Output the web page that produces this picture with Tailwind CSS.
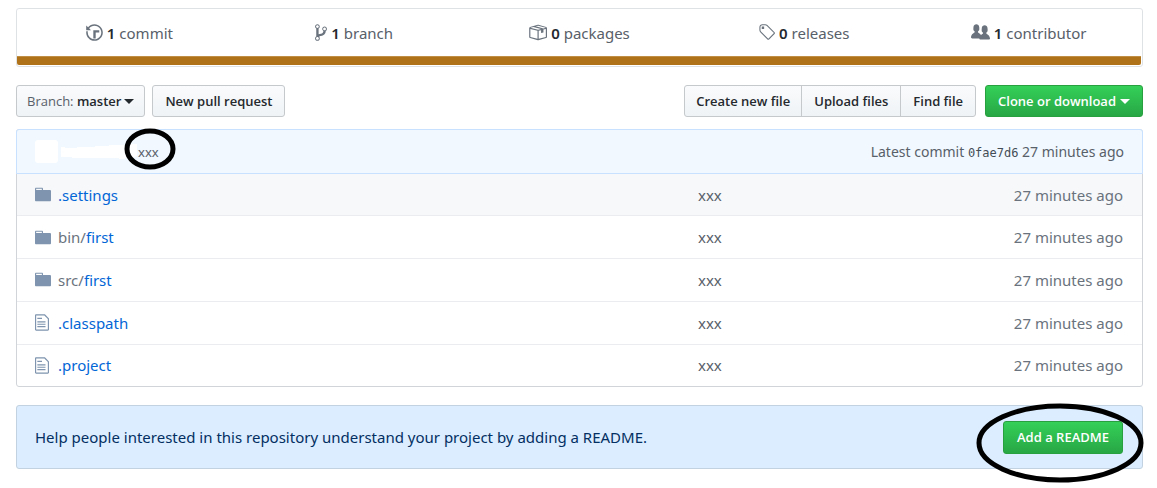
<!DOCTYPE html>
<html lang="en">
<head>
<meta charset="utf-8">
<meta name="viewport" content="width=device-width, initial-scale=1">
<title>Repository</title>
<script src="https://cdn.jsdelivr.net/npm/@tailwindcss/browser@4"></script>
</head>
<body class="min-h-screen bg-white pt-2 pr-[14px] pb-4 pl-4 font-['Noto_Sans','Open_Sans',sans-serif] text-[15px] leading-6 text-[#586069]">
<svg class="hidden" aria-hidden="true">
  <symbol id="folder" viewBox="0 0 14 16"><path d="M13 4H7V3c0-.66-.31-1-1-1H1c-.55 0-1 .45-1 1v10c0 .55.45 1 1 1h12c.55 0 1-.45 1-1V5c0-.55-.45-1-1-1zM6 4H1V3h5v1z"/></symbol>
  <symbol id="file" viewBox="0 0 12 16"><path d="M6 5H2V4h4v1zM2 8h7V7H2v1zm0 2h7V9H2v1zm0 2h7v-1H2v1zm10-7.5V14c0 .55-.45 1-1 1H1c-.55 0-1-.45-1-1V2c0-.55.45-1 1-1h7.5L12 4.5zM11 5L8 2H1v12h10V5z"/></symbol>
</svg>
<main>
  <section class="rounded-[3px] border border-[#dfe2e5] pr-px pb-px">
    <ul class="grid h-[47px] grid-cols-5 items-center">
      <li><a href="#" class="flex items-center justify-center gap-1"><svg class="h-[19px] w-[17px] fill-[#6a737d]" viewBox="0 0 14 16"><path d="M8 13H6V6h5v2H8v5zM7 1C4.81 1 2.87 2.02 1.59 3.59L0 2v4h4L2.5 4.5C3.55 3.17 5.17 2.3 7 2.3c3.14 0 5.7 2.56 5.7 5.7s-2.56 5.7-5.7 5.7A5.71 5.71 0 0 1 1.3 8c0-.34.03-.67.09-1H.08C.03 7.33 0 7.66 0 8c0 3.86 3.14 7 7 7s7-3.14 7-7-3.14-7-7-7z"/></svg><span><b class="font-semibold text-[#24292e]">1</b> commit</span></a></li>
      <li><a href="#" class="flex items-center justify-center gap-1"><svg class="h-[19px] w-3 fill-[#6a737d]" viewBox="0 0 10 16"><path d="M10 5c0-1.11-.89-2-2-2a1.993 1.993 0 0 0-1 3.72v.3c-.02.52-.23.98-.63 1.38-.4.4-.86.61-1.38.63-.83.02-1.48.16-2 .45V4.72a1.993 1.993 0 0 0-1-3.72C.88 1 0 1.89 0 3a2 2 0 0 0 1 1.72v6.56c-.59.35-1 .99-1 1.72 0 1.11.89 2 2 2 1.11 0 2-.89 2-2 0-.53-.2-1-.53-1.36.09-.06.48-.41.59-.47.25-.11.56-.17.94-.17 1.05-.05 1.95-.45 2.75-1.25S8.95 7.77 9 6.73h-.02C9.59 6.37 10 5.73 10 5zM2 1.8c.66 0 1.2.55 1.2 1.2 0 .65-.55 1.2-1.2 1.2C1.35 4.2.8 3.65.8 3c0-.65.55-1.2 1.2-1.2zm0 12.41c-.66 0-1.2-.55-1.2-1.2 0-.65.55-1.2 1.2-1.2.65 0 1.2.55 1.2 1.2 0 .65-.55 1.2-1.2 1.2zm6-8c-.66 0-1.2-.55-1.2-1.2 0-.65.55-1.2 1.2-1.2.65 0 1.2.55 1.2 1.2 0 .65-.55 1.2-1.2 1.2z"/></svg><span><b class="font-semibold text-[#24292e]">1</b> branch</span></a></li>
      <li><a href="#" class="flex items-center justify-center gap-1"><svg class="h-[19px] w-[19px] fill-[#6a737d]" viewBox="0 0 16 16"><path d="M1 4.27v7.47c0 .45.3.84.75.97l6.5 1.73c.16.05.34.05.5 0l6.5-1.73c.45-.13.75-.52.75-.97V4.27c0-.45-.3-.84-.75-.97l-6.5-1.74a1.4 1.4 0 0 0-.5 0L1.75 3.3c-.45.13-.75.52-.75.97zm7 9.09l-6-1.59V5l6 1.61v6.75zM2 4l2.5-.67L11 5.06l-2.5.67L2 4zm13 7.77l-6 1.59V6.61l2-.55V8.5l2-.53V5.53L15 5v6.77zm-2-7.24L6.5 2.8l2-.53L15 4l-2 .53z"/></svg><span><b class="font-semibold text-[#24292e]">0</b> packages</span></a></li>
      <li><a href="#" class="flex items-center justify-center gap-1"><svg class="h-[19px] w-[17px] fill-[#6a737d]" viewBox="0 0 14 16"><path d="M7.73 1.73C7.26 1.26 6.62 1 5.96 1H3.5C2.13 1 1 2.13 1 3.5v2.47c0 .66.27 1.3.73 1.77l6.06 6.06c.39.39 1.02.39 1.41 0l4.59-4.59a.996.996 0 0 0 0-1.41L7.73 1.73zM2.38 7.09c-.31-.3-.47-.7-.47-1.13V3.5c0-.88.72-1.59 1.59-1.59h2.47c.42 0 .83.16 1.13.47l6.14 6.13-4.73 4.73-6.13-6.15zM3.01 3h2v2H3V3h.01z"/></svg><span><b class="font-semibold text-[#24292e]">0</b> releases</span></a></li>
      <li><a href="#" class="flex items-center justify-center gap-1"><svg class="h-[19px] w-[19px] fill-[#6a737d]" viewBox="0 0 16 16"><path d="M16 12.999c0 .439-.45 1-1 1H7.995c-.539 0-.994-.447-.995-.999H1c-.54 0-1-.561-1-1 0-2.634 3-4 3-4s.229-.409 0-1c-.841-.621-1.058-.59-1-3 .058-2.419 1.367-3 2.5-3s2.442.58 2.5 3c.058 2.41-.159 2.379-1 3-.229.59 0 1 0 1s1.549.711 2.42 2.088C9.196 9.369 10 8.999 10 8.999s.229-.409 0-1c-.841-.62-1.058-.59-1-3 .058-2.419 1.367-3 2.5-3s2.437.581 2.495 3c.059 2.41-.158 2.38-1 3-.229.59 0 1 0 1s3.005 1.366 3.005 4"/></svg><span><b class="font-semibold text-[#24292e]">1</b> contributor</span></a></li>
    </ul>
    <div class="h-[9px] rounded-b-[2px] border-t border-[#c08e45] bg-[#b07219]"></div>
  </section>

  <div class="mt-[18px] flex items-center font-['Open_Sans','Noto_Sans',sans-serif] text-[13px] leading-[30px] font-semibold text-[#24292e]">
    <button class="flex items-center gap-[3px] rounded-[3px] border border-[#c5c9cc] bg-linear-to-b from-[#fafbfc] to-[#eff3f6] px-[10px]"><span><span class="font-normal text-[#586069]">Branch:</span> master</span><span class="border-x-[5px] border-t-[5px] border-x-transparent border-t-[#24292e]"></span></button>
    <button class="ml-[7px] rounded-[3px] border border-[#c5c9cc] bg-linear-to-b from-[#fafbfc] to-[#eff3f6] px-3">New pull request</button>
    <div class="ml-auto flex divide-x divide-[#c5c9cc] rounded-[3px] border border-[#c5c9cc] bg-linear-to-b from-[#fafbfc] to-[#eff3f6]">
      <button class="px-[11px]">Create new file</button>
      <button class="px-3">Upload files</button>
      <button class="px-3">Find file</button>
    </div>
    <button class="ml-[9px] flex items-center gap-1 rounded-[3px] border border-[#28a03f] bg-linear-to-b from-[#34d058] to-[#28a745] px-3 text-white"><span>Clone or download</span><span class="border-x-[5px] border-t-[5px] border-x-transparent border-t-white"></span></button>
  </div>

  <section class="mt-3 rounded-[3px] border border-[#d1d5da]">
    <div class="relative -mx-px -mt-px flex h-[45px] items-center rounded-t-[3px] border border-[#c8e1ff] bg-[#f1f8ff] px-[18px]">
      <span class="size-[23px] rounded-[3px] bg-white"></span>
      <svg class="ml-[3px] h-4 w-[76px] fill-white" viewBox="0 0 76 16"><path d="M0 3H4V4H16V3H34V2H48V1H64V0H76V12L72 14H64V15H58V14H11V13H0Z"/></svg>
      <span class="ml-px text-[13px]">xxx</span>
      <svg class="absolute -top-[2px] left-[107px] h-[42px] w-[52px] fill-none stroke-black stroke-[5]" viewBox="0 0 52 42"><ellipse cx="26" cy="21" rx="23" ry="18"/></svg>
      <span class="ml-auto text-sm">Latest commit <a href="#" class="font-['DejaVu_Sans_Mono',monospace] text-xs text-[#444d56]">0fae7d6</a> 27 minutes ago</span>
    </div>
    <table class="h-[212px] w-full border-collapse">
      <tbody class="divide-y divide-[#eaecef]">
        <tr class="bg-[#f6f8fa]"><td class="w-[41px] pl-[18px]"><svg class="h-[19px] w-4 fill-[#7f94ae]"><use href="#folder"/></svg></td><td><a href="#" class="text-[#0366d6]">.settings</a></td><td class="w-[298px]">xxx</td><td class="w-[146px] pr-[19px] text-right text-[#6a737d]">27 minutes ago</td></tr>
        <tr><td class="pl-[18px]"><svg class="h-[19px] w-4 fill-[#7f94ae]"><use href="#folder"/></svg></td><td><a href="#" class="text-[#0366d6]"><span class="text-[#6a737d]">bin/</span>first</a></td><td>xxx</td><td class="pr-[19px] text-right text-[#6a737d]">27 minutes ago</td></tr>
        <tr><td class="pl-[18px]"><svg class="h-[19px] w-4 fill-[#7f94ae]"><use href="#folder"/></svg></td><td><a href="#" class="text-[#0366d6]"><span class="text-[#6a737d]">src/</span>first</a></td><td>xxx</td><td class="pr-[19px] text-right text-[#6a737d]">27 minutes ago</td></tr>
        <tr><td class="pl-[18px]"><svg class="h-[19px] w-[14px] fill-[#7f94ae]"><use href="#file"/></svg></td><td><a href="#" class="text-[#0366d6]">.classpath</a></td><td>xxx</td><td class="pr-[19px] text-right text-[#6a737d]">27 minutes ago</td></tr>
        <tr><td class="pl-[18px]"><svg class="h-[19px] w-[14px] fill-[#7f94ae]"><use href="#file"/></svg></td><td><a href="#" class="text-[#0366d6]">.project</a></td><td>xxx</td><td class="pr-[19px] text-right text-[#6a737d]">27 minutes ago</td></tr>
      </tbody>
    </table>
  </section>

  <section class="relative mt-[18px] flex h-16 items-center justify-between rounded-[3px] border border-[#c3d2e0] bg-[#dbedff] pr-[19px] pl-[18px] text-[#032f62]">
    <p>Help people interested in this repository understand your project by adding a README.</p>
    <button class="rounded-[3px] border border-[#28a03f] bg-linear-to-b from-[#34d058] to-[#28a745] px-[13px] font-['Open_Sans','Noto_Sans',sans-serif] text-[13px] leading-[31px] font-semibold text-white">Add a README</button>
    <svg class="pointer-events-none absolute -top-[3px] -right-[2px] h-20 w-[168px] fill-none stroke-black stroke-[5]" viewBox="0 0 168 80"><ellipse cx="84" cy="40" rx="81" ry="37"/></svg>
  </section>
</main>
</body>
</html>
